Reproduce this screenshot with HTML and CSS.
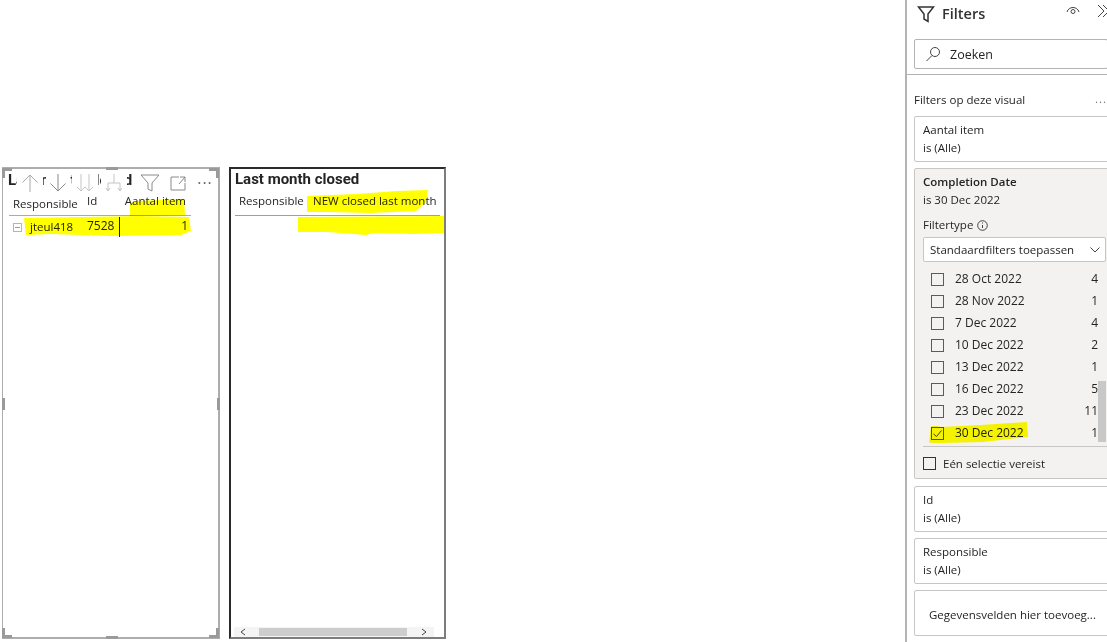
FILE: index.html
```html
<!DOCTYPE html>
<html lang="nl">
<head>
<meta charset="utf-8">
<title>Report</title>
<link rel="stylesheet" href="styles.css">
</head>
<body>
<main class="canvas">
  <section class="visual visual-focus">
    <h2 class="title">Last month closed</h2>
    <div class="toolbar">
      <span class="tool tool-up"><svg width="18" height="20" viewBox="0 0 18 20"><path d="M9 19V2M1.500 9.500 9 2l7.500 7.500" class="ic-light"/></svg></span>
      <span class="tool tool-down"><svg width="18" height="20" viewBox="0 0 18 20"><path d="M9 1v17M1.500 10.500 9 18l7.500-7.500" class="ic-mid"/></svg></span>
      <span class="tool tool-dbl"><svg width="18" height="20" viewBox="0 0 18 20"><path d="M5 1v17M1 14l4 4 4-4M13 1v17M9 14l4 4 4-4" class="ic-faint"/></svg></span>
      <span class="tool tool-fork"><svg width="18" height="20" viewBox="0 0 18 20"><path d="M9 1v9M3 18v-8h12v8M1 15l2 3 2-3M13 15l2 3 2-3" class="ic-faint"/></svg></span>
      <span class="tool tool-filter"><svg width="20" height="18" viewBox="0 0 20 18"><path d="M1 1h18l-7 8v8l-4-2V9z" class="ic-mid"/></svg></span>
      <span class="tool tool-expand"><svg width="16" height="15" viewBox="0 0 16 15"><path d="M9 1H1v13h14V7M9 8l6-7M10 1h5v5" class="ic-mid"/></svg></span>
      <span class="tool tool-dots">···</span>
    </div>
    <div class="table-one">
      <div class="row head-row">
        <span class="col-resp">Responsible</span><span class="col-id">Id</span><span class="col-count">Aantal item</span>
      </div>
      <div class="row data-row">
        <span class="col-resp"><i class="expander"></i>jteul418</span><span class="col-id num">7528</span><span class="col-count col-cut num">1</span>
      </div>
    </div>
    <i class="corner c-tl"></i><i class="corner c-bl"></i><i class="corner c-br"></i><i class="corner c-tr"></i>
    <i class="grip g-top"></i><i class="grip g-bottom"></i><i class="grip g-left"></i><i class="grip g-right"></i>
  </section>

  <section class="visual visual-plain">
    <h2 class="title">Last month closed</h2>
    <div class="table-two">
      <span class="two-resp">Responsible</span><span class="two-new">NEW closed last month</span>
    </div>
    <div class="hscroll">
      <svg width="8" height="8" viewBox="0 0 8 8"><path d="M6 1 2 4l4 3" class="ic-dark"/></svg>
      <span class="hthumb"></span>
      <svg width="8" height="8" viewBox="0 0 8 8"><path d="M2 1l4 3-4 3" class="ic-dark"/></svg>
    </div>
  </section>
</main>

<aside class="pane">
  <header class="pane-head">
    <svg class="pane-funnel" width="18" height="18" viewBox="0 0 18 18"><path d="M1.500 2h15L11 9v7.500L7 14V9z" class="ic-strong"/></svg>
    <h1>Filters</h1>
    <svg class="pane-eye" width="14" height="12" viewBox="0 0 14 12"><path d="M1 8c1.500-6 10.500-6 12 0" class="ic-dark"/><circle cx="7" cy="7.500" r="2" class="ic-dark"/></svg>
    <svg class="pane-close" width="14" height="14" viewBox="0 0 14 14"><path d="M2 1l6 6-6 6M7 1l6 6-6 6" class="ic-dark"/></svg>
  </header>
  <div class="search">
    <svg width="16" height="16" viewBox="0 0 16 16"><circle cx="10" cy="6" r="4.500" class="ic-dark"/><path d="M7 9.500 1.500 15" class="ic-dark"/></svg>
    <span class="search-text">Zoeken</span>
  </div>
  <div class="pane-body">
    <div class="section-label"><span>Filters op deze visual</span><span class="more">...</span></div>
    <div class="card"><div>Aantal item</div><div>is (Alle)</div></div>
    <div class="card card-open">
      <div class="strong">Completion Date</div>
      <div>is 30 Dec 2022</div>
      <div class="ftype">Filtertype <svg width="11" height="11" viewBox="0 0 11 11"><circle cx="5.500" cy="5.500" r="4.800" class="ic-dark"/><path d="M5.500 5v3M5.500 2.500v1" class="ic-dark"/></svg></div>
      <div class="select"><span>Standaardfilters toepassen</span><svg width="10" height="6" viewBox="0 0 10 6"><path d="M.5.500 5 5 9.500.500" class="ic-dark"/></svg></div>
      <ul class="options">
        <li><i class="check"></i><span>28 Oct 2022</span><b>4</b></li>
        <li><i class="check"></i><span>28 Nov 2022</span><b>1</b></li>
        <li><i class="check"></i><span>7 Dec 2022</span><b>4</b></li>
        <li><i class="check"></i><span>10 Dec 2022</span><b>2</b></li>
        <li><i class="check"></i><span>13 Dec 2022</span><b>1</b></li>
        <li><i class="check"></i><span>16 Dec 2022</span><b>5</b></li>
        <li><i class="check"></i><span>23 Dec 2022</span><b>11</b></li>
        <li><i class="check"><svg width="11" height="11" viewBox="0 0 11 11"><path d="M1.500 6 4.500 8.500 9.500 2.500" class="ic-dark"/></svg></i><span>30 Dec 2022</span><b>1</b></li>
        <li class="vthumb"></li>
      </ul>
      <div class="require"><i class="check dark"></i><span>Eén selectie vereist</span></div>
    </div>
    <div class="card"><div>Id</div><div>is (Alle)</div></div>
    <div class="card"><div>Responsible</div><div>is (Alle)</div></div>
    <div class="card card-add">Gegevensvelden hier toevoeg...</div>
  </div>
</aside>

<svg class="marker" width="1107" height="642" viewBox="0 0 1107 642">
  <path d="M130 204l6-3 48-2 1 16-55 1z"/>
  <path d="M24 218l60-1 55-1 50 1 2 14-10 4-70 1-60-2-25 1z"/>
  <path d="M307 196l50-2 40-3 31-1-2 12-10 9-45 2-45-1-19 0z"/>
  <path d="M298 217l146-1 0 17-30 1-40-1-8 2-38-3-30 0z"/>
  <path d="M931 426h6l4 1 40-2 46-3 1 15-45 5-40 1-12 0-1-1-1 1z"/>
</svg>
</body>
</html>
```
FILE: styles.css
```css
* { box-sizing: border-box; }
html, body { margin: 0; height: 642px; overflow: hidden; background: #fff; }
body { display: flex; font: 11.500px/18px "Open Sans", "Noto Sans", sans-serif; color: #252423; }
svg path, svg circle { fill: none; stroke-width: 1; }
.ic-light { stroke: #a9a9a9; }
.ic-mid { stroke: #8a8a8a; }
.ic-faint { stroke: #c4c4c4; }
.ic-dark { stroke: #444; }
.ic-strong { stroke: #333; stroke-width: 1.500; }
.num { font-size: 12px; }

.canvas { position: relative; width: 905px; height: 642px; flex: none; }
.visual { position: absolute; top: 167px; height: 472px; background: #fff; }
.visual-focus { left: 2px; width: 218px; border: 2px solid #adadad; border-left-width: 1px; }
.visual-plain { left: 229px; width: 217px; border: 2px solid #2b2b2b; border-right-color: #7d7d7d; border-bottom-color: #7d7d7d; }
.title { margin: 0; font: 700 15px/18px Roboto, sans-serif; color: #252423; white-space: nowrap; }
.visual-focus .title { padding: 2px 0 0 5px; }
.visual-plain .title { padding: 1px 0 0 4px; }

.toolbar { position: absolute; left: 14px; top: 3px; height: 22px; display: flex; align-items: center; }
.tool { display: flex; justify-content: center; align-items: center; background: #fff; height: 22px; flex: none; }
.tool-up { width: 26px; }
.tool-down { width: 24px; margin-left: 3px; }
.tool-dbl { width: 26px; margin-left: 2px; }
.tool-fork { width: 26px; margin-left: 3px; }
.tool-filter { width: 24px; margin-left: 11px; }
.tool-expand { width: 24px; margin-left: 4px; }
.tool-dots { width: 22px; margin-left: 4px; font-size: 16px; letter-spacing: 1px; color: #666; }

.table-one { position: absolute; left: 6px; top: 23px; width: 182px; }
.row { display: flex; white-space: nowrap; }
.head-row { height: 24px; border-bottom: 1px solid #a5a8c8; }
.data-row { height: 21px; padding-top: 1px; }
.col-resp { width: 78px; padding-left: 4px; display: flex; align-items: center; flex: none; }
.col-id { width: 32px; flex: none; }
.col-count { flex: 1; text-align: right; padding-right: 5px; }
.col-cut { border-left: 1px solid #252423; padding-right: 3px; }
.expander { width: 9px; height: 9px; border: 1px solid #b5b5b5; margin-right: 8px; background: linear-gradient(#999, #999) center / 5px 1px no-repeat; flex: none; }

.corner { position: absolute; width: 10px; height: 10px; border: 0 solid #9a9a9a; }
.c-tl { left: -1px; top: -1px; border-width: 3px 0 0 3px; }
.c-bl { left: -1px; bottom: -1px; border-width: 0 0 3px 3px; }
.c-br { right: -1px; bottom: -1px; border-width: 0 3px 3px 0; }
.c-tr { right: -1px; top: -1px; border-width: 3px 3px 0 0; }
.grip { position: absolute; background: #9a9a9a; }
.g-top, .g-bottom { left: 103px; width: 12px; height: 3px; }
.g-top { top: -2px; }
.g-bottom { bottom: -2px; }
.g-left, .g-right { top: 229px; width: 3px; height: 12px; }
.g-left { left: -1px; }
.g-right { right: -2px; }

.table-two { position: absolute; left: 4px; top: 23px; width: 205px; height: 24px; border-bottom: 1px solid #9a9cb8; white-space: nowrap; display: flex; }
.two-resp { width: 78px; padding-left: 4px; flex: none; }
.hscroll { position: absolute; left: 3px; bottom: 0; width: 200px; height: 10px; background: #f4f4f4; display: flex; align-items: center; justify-content: space-between; padding: 0 6px 0 5px; }
.hthumb { width: 148px; height: 8px; background: #cdcdcd; margin-left: 6px; margin-right: 7px; }

.pane { width: 202px; height: 642px; flex: none; border-left: 2px solid #b5b3b1; overflow: hidden; }
.pane-head { height: 39px; display: flex; align-items: flex-start; padding-top: 4px; position: relative; }
.pane-funnel { margin: 1px 0 0 10px; }
.pane h1 { margin: 0 0 0 7px; font: 600 14.500px/20px "Open Sans", sans-serif; color: #333; }
.pane-eye { position: absolute; left: 159px; top: 4px; }
.pane-close { position: absolute; left: 189px; top: 4px; }
.search { margin-left: 7px; width: 194px; height: 30px; border: 1px solid #b5b3b1; border-radius: 2px; display: flex; align-items: center; gap: 9px; padding-left: 10px; font-size: 12.500px; }
.search-text { padding-top: 2px; }
.pane-body { margin-top: 5px; border-top: 1px solid #b5b3b1; padding: 16px 0 0 7px; }
.section-label { display: flex; justify-content: space-between; height: 25px; line-height: 18px; width: 193px; }
.more { color: #777; line-height: 16px; letter-spacing: 1px; }
.card { width: 205px; height: 46px; border: 1px solid #c8c6c4; border-radius: 2px; background: #fff; padding: 4px 8px 0; margin: 0 0 6px; }
.card-open { height: 311px; background: #f3f2f1; position: relative; margin-top: 6px; margin-bottom: 7px; }
.strong { font-weight: 600; }
.ftype { margin-top: 7px; height: 18px; display: flex; align-items: center; gap: 4px; }
.select { margin-top: 3px; width: 183px; height: 25px; background: #fff; border: 1px solid #c8c6c4; border-radius: 2px; display: flex; align-items: center; justify-content: space-between; padding: 0 5px 0 6px; }
.options { list-style: none; margin: 6px 0 0 -8px; padding: 0; width: 191px; position: relative; height: 178px; overflow: hidden; font-size: 12px; }
.options li { height: 22px; display: flex; align-items: center; padding-left: 16px; width: 183px; }
.options li span { margin-left: 11px; flex: 1; }
.options b { font-weight: 400; }
.check { width: 13px; height: 13px; border: 1px solid #5c5866; background: transparent; flex: none; display: block; line-height: 0; }
.options .vthumb { position: absolute; right: 0; top: 113px; width: 8px; height: 61px; padding: 0; background: #c8c8c8; }
.require { border-top: 1px solid #c8c6c4; padding-top: 4px; height: 30px; width: 190px; display: flex; align-items: center; gap: 7px; }
.check.dark { border-color: #333; }
.card-add { padding: 15px 0 0 14px; white-space: nowrap; }

.marker { position: absolute; left: 0; top: 0; mix-blend-mode: multiply; pointer-events: none; }
.marker path { fill: #ffff00; stroke: none; }
```
